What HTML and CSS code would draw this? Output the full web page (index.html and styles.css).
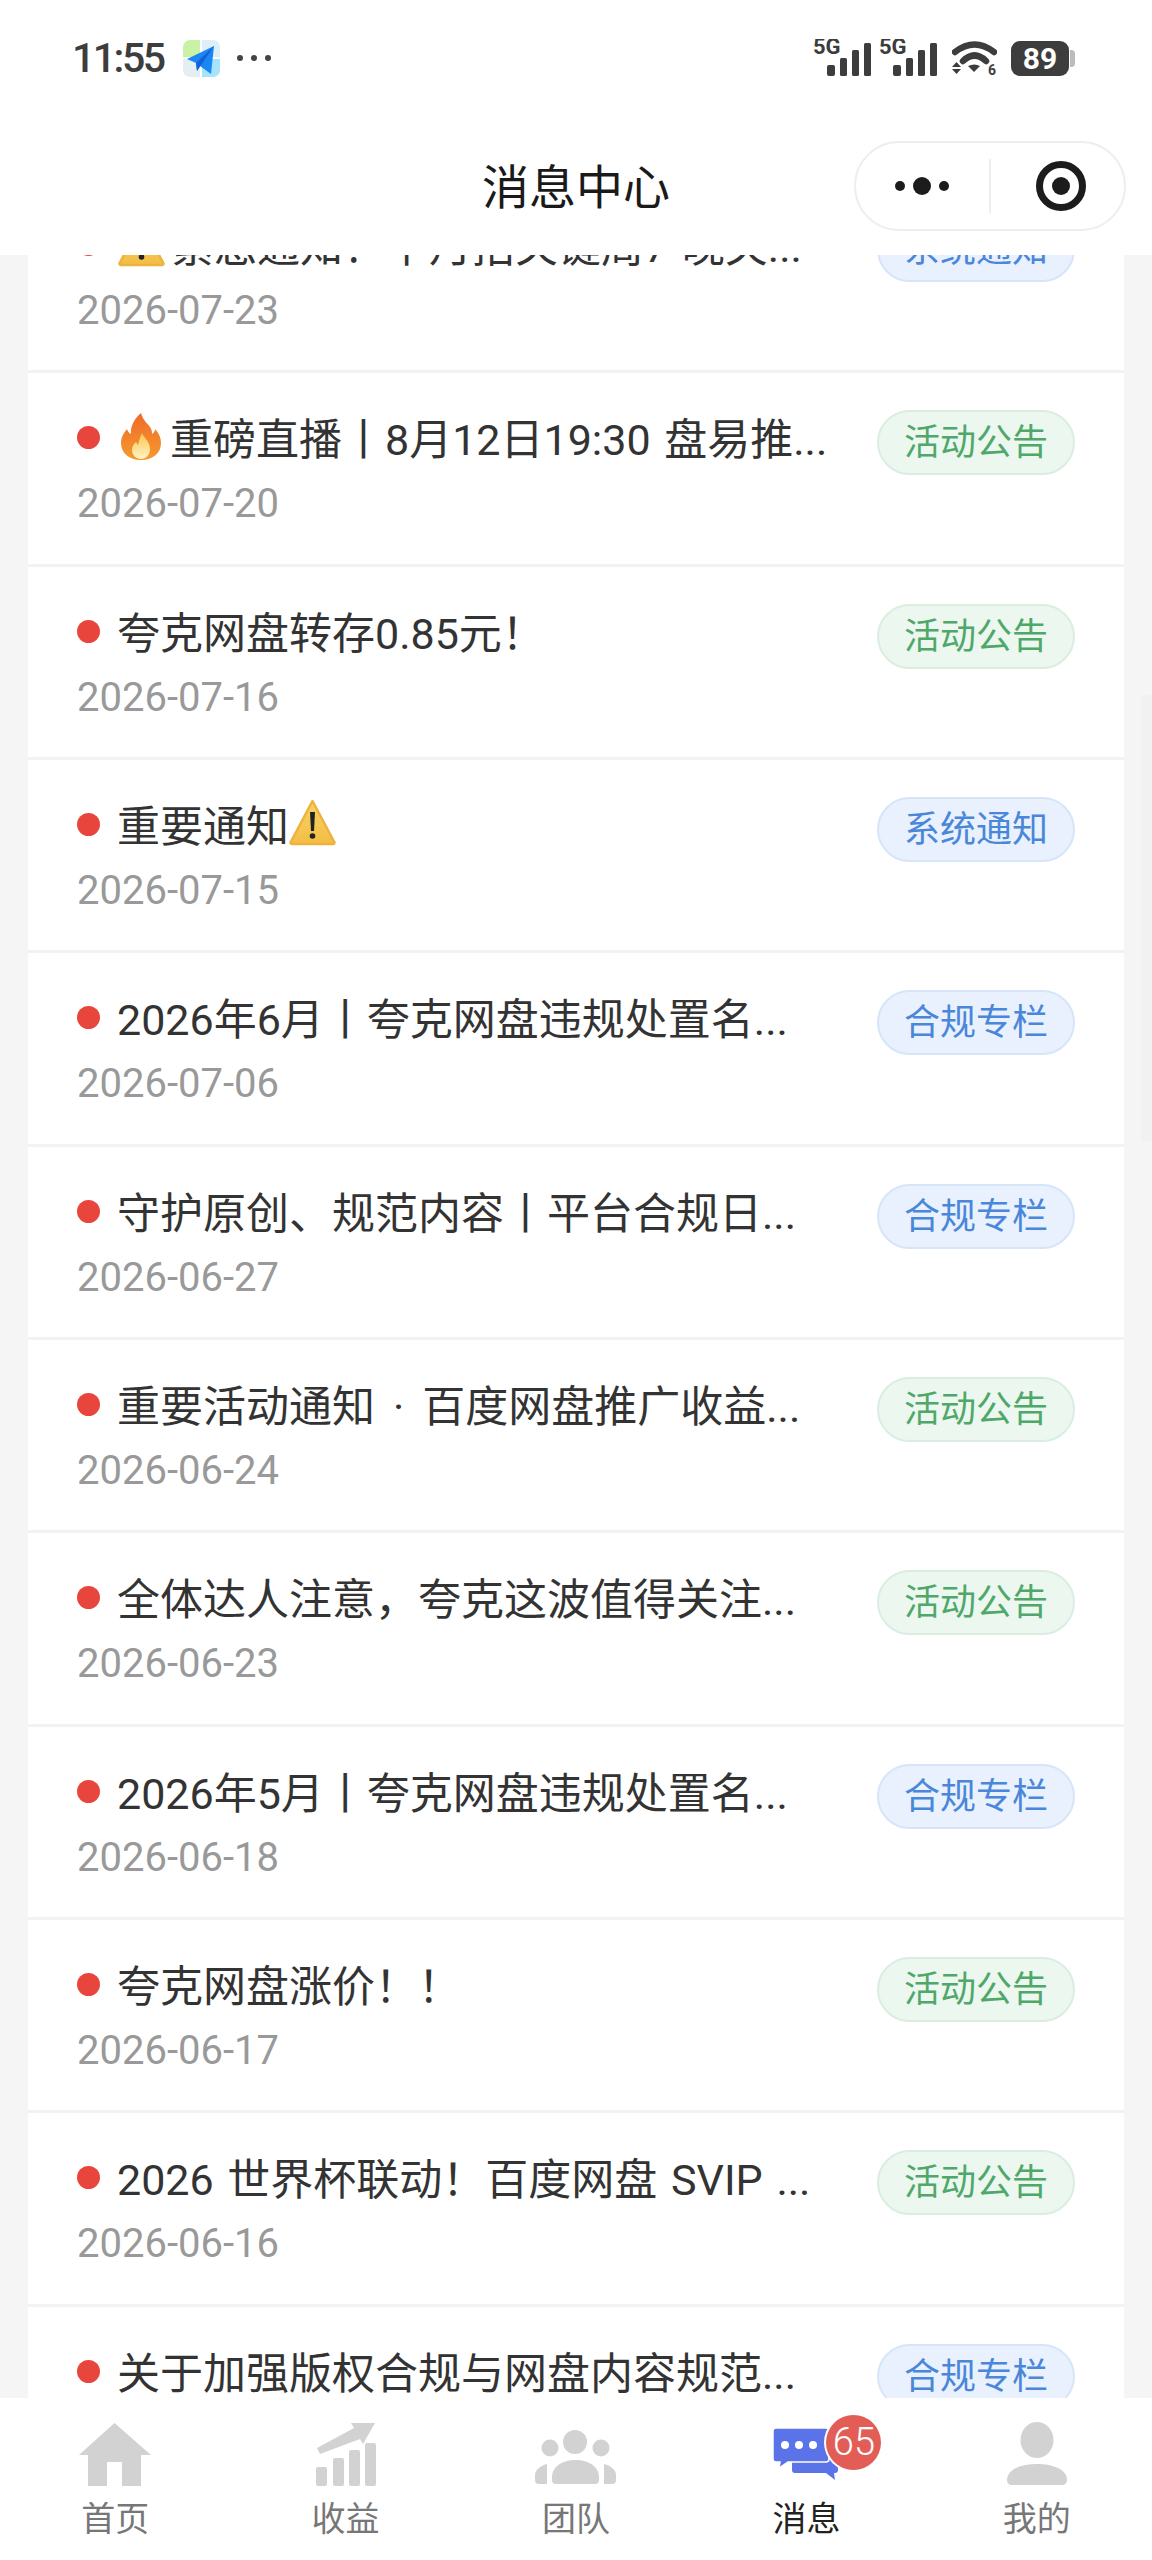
FILE: index.html
```html
<!DOCTYPE html>
<html lang="zh-CN">
<head>
  <meta charset="UTF-8">
  <meta name="viewport" content="width=device-width, initial-scale=1.0">
  <title>消息中心</title>
  <link rel="stylesheet" href="styles.css">
</head>
<body>

  <div class="page">
    <header class="top">
      <div class="status-bar">
        <div class="status-left">
          <span class="clock">11:55</span>
          <svg class="app-icon" width="37" height="37" viewBox="0 0 37 37">
            <path d="M7 0h10v17H0V7a7 7 0 0 1 7-7z" fill="#c8f2a6"/>
            <path d="M19 0h11a7 7 0 0 1 7 7v10H19z" fill="#dfeff8"/>
            <path d="M0 19h17v18H7a7 7 0 0 1-7-7z" fill="#e4eff3"/>
            <path d="M19 19h18v11a7 7 0 0 1-7 7H19z" fill="#a6e4fb"/>
            <path d="M31 6 4 19l9 4 1 8 3-5 11 8z" fill="#1c86f2"/>
            <path d="M13 23 31 6 14 31z" fill="#0f62d8"/>
          </svg>
          <span class="more-dots"><i></i><i></i><i></i></span>
        </div>
        <div class="status-right">
          <svg class="signal" width="60" height="38" viewBox="0 0 60 38">
            <text x="0" y="15" class="sig-text">5G</text>
            <rect x="14" y="26" width="8" height="11" rx="2"/>
            <rect x="27" y="19" width="7" height="18" rx="1.5"/>
            <rect x="39" y="11" width="7" height="26" rx="1.5"/>
            <rect x="51" y="4" width="7" height="33" rx="1.5"/>
          </svg>
          <svg class="signal" width="60" height="38" viewBox="0 0 60 38">
            <text x="0" y="15" class="sig-text">5G</text>
            <rect x="14" y="26" width="8" height="11" rx="2"/>
            <rect x="27" y="19" width="7" height="18" rx="1.5"/>
            <rect x="39" y="11" width="7" height="26" rx="1.5"/>
            <rect x="51" y="4" width="7" height="33" rx="1.5"/>
          </svg>
          <svg class="wifi" width="45" height="36" viewBox="0 0 45 36">
            <path d="M3 12Q22.500-3 42 12" fill="none" stroke="#3d3d3d" stroke-width="6.500" stroke-linecap="round"/>
            <path d="M11 21Q22.500 10 34 21" fill="none" stroke="#3d3d3d" stroke-width="6.500" stroke-linecap="round"/>
            <path d="M16 26q6.500-3 12 0l-6 6z" fill="#3d3d3d"/>
            <path d="M4.500 22 9 27H0zM0 29h9l-4.500 5z" fill="#3d3d3d"/>
            <text x="36" y="35" class="wifi-text">6</text>
          </svg>
          <div class="battery"><span class="battery-num">89</span></div>
        </div>
      </div>
      <nav class="nav-bar">
        <span></span>
        <h1 class="nav-title">消息中心</h1>
        <div class="capsule">
          <svg width="66" height="20" viewBox="0 0 66 20">
            <circle cx="5" cy="10" r="5"/>
            <circle cx="27" cy="10" r="9"/>
            <circle cx="49" cy="10" r="5"/>
          </svg>
          <span class="capsule-line"></span>
          <svg width="50" height="50" viewBox="0 0 50 50">
            <circle cx="25" cy="25" r="21.500" fill="none" stroke="#1c1c1c" stroke-width="7"/>
            <circle cx="25" cy="25" r="9"/>
          </svg>
        </div>
      </nav>
    </header>

    <main class="list-wrap">
      <div class="list">

        <div class="msg">
          <div class="msg-main">
            <div class="msg-title"><i class="dot"></i><svg class="emoji" viewBox="0 0 47 47"><use href="#warn"/></svg><span class="msg-text">紧急通知！下月招关键周7 晚关...</span></div>
            <div class="msg-date">2026-07-23</div>
          </div>
          <span class="tag tag-blue">系统通知</span>
        </div>

        <div class="msg">
          <div class="msg-main">
            <div class="msg-title"><i class="dot"></i><svg class="emoji emoji-fire" viewBox="0 0 40 47">
              <defs>
                <linearGradient id="fireOuter" x1="0" y1="0" x2="0" y2="1">
                  <stop offset="0" stop-color="#f06a2a"/>
                  <stop offset="1" stop-color="#f59a2e"/>
                </linearGradient>
                <linearGradient id="fireInner" x1="0" y1="0" x2="0" y2="1">
                  <stop offset="0" stop-color="#fbc64f"/>
                  <stop offset="1" stop-color="#fff3c4"/>
                </linearGradient>
              </defs>
              <path d="M20 0c2 7 6 10 9 14 2 3 2 5 2 7 2-1 3-3 3-5 4 4 6 9 6 14 0 10-8 17-20 17S0 40 0 30c0-6 3-10 6-14 1 3 2 4 4 5C9 13 14 5 20 0z" fill="url(#fireOuter)"/>
              <path d="M21 20c1 4 8 8 8 16 0 6-4 10-9 10s-9-4-9-9c0-4 2-6 4-8 1 1 1 2 2 3 1-4 2-8 4-12z" fill="url(#fireInner)"/>
            </svg><span class="msg-text">重磅直播丨8月12日19:30 盘易推...</span></div>
            <div class="msg-date">2026-07-20</div>
          </div>
          <span class="tag tag-green">活动公告</span>
        </div>

        <div class="msg">
          <div class="msg-main">
            <div class="msg-title"><i class="dot"></i><span class="msg-text">夸克网盘转存0.85元！</span></div>
            <div class="msg-date">2026-07-16</div>
          </div>
          <span class="tag tag-green">活动公告</span>
        </div>

        <div class="msg">
          <div class="msg-main">
            <div class="msg-title"><i class="dot"></i><span class="msg-text">重要通知</span><svg class="emoji emoji-after" viewBox="0 0 47 47">
              <defs>
                <linearGradient id="warnFill" x1="0" y1="0" x2="0" y2="1">
                  <stop offset="0" stop-color="#f8d468"/>
                  <stop offset="1" stop-color="#f3bd45"/>
                </linearGradient>
                <g id="warn">
                  <path d="M23.500 2 45 42.500a1.500 1.500 0 0 1-1.500 2.500h-40A1.500 1.500 0 0 1 2 42.500z" fill="url(#warnFill)" stroke="#eeb23f" stroke-width="2.500" stroke-linejoin="round"/>
                  <path d="M21 13h5l-1 19h-3z" fill="#222"/>
                  <circle cx="23.500" cy="37" r="2.800" fill="#222"/>
                </g>
              </defs>
              <use href="#warn"/>
            </svg></div>
            <div class="msg-date">2026-07-15</div>
          </div>
          <span class="tag tag-blue">系统通知</span>
        </div>

        <div class="msg">
          <div class="msg-main">
            <div class="msg-title"><i class="dot"></i><span class="msg-text">2026年6月丨夸克网盘违规处置名...</span></div>
            <div class="msg-date">2026-07-06</div>
          </div>
          <span class="tag tag-blue">合规专栏</span>
        </div>

        <div class="msg">
          <div class="msg-main">
            <div class="msg-title"><i class="dot"></i><span class="msg-text">守护原创、规范内容丨平台合规日...</span></div>
            <div class="msg-date">2026-06-27</div>
          </div>
          <span class="tag tag-blue">合规专栏</span>
        </div>

        <div class="msg">
          <div class="msg-main">
            <div class="msg-title"><i class="dot"></i><span class="msg-text">重要活动通知<span class="mid">·</span>百度网盘推广收益...</span></div>
            <div class="msg-date">2026-06-24</div>
          </div>
          <span class="tag tag-green">活动公告</span>
        </div>

        <div class="msg">
          <div class="msg-main">
            <div class="msg-title"><i class="dot"></i><span class="msg-text">全体达人注意，夸克这波值得关注...</span></div>
            <div class="msg-date">2026-06-23</div>
          </div>
          <span class="tag tag-green">活动公告</span>
        </div>

        <div class="msg">
          <div class="msg-main">
            <div class="msg-title"><i class="dot"></i><span class="msg-text">2026年5月丨夸克网盘违规处置名...</span></div>
            <div class="msg-date">2026-06-18</div>
          </div>
          <span class="tag tag-blue">合规专栏</span>
        </div>

        <div class="msg">
          <div class="msg-main">
            <div class="msg-title"><i class="dot"></i><span class="msg-text">夸克网盘涨价！！</span></div>
            <div class="msg-date">2026-06-17</div>
          </div>
          <span class="tag tag-green">活动公告</span>
        </div>

        <div class="msg">
          <div class="msg-main">
            <div class="msg-title"><i class="dot"></i><span class="msg-text">2026 世界杯联动！百度网盘 SVIP ...</span></div>
            <div class="msg-date">2026-06-16</div>
          </div>
          <span class="tag tag-green">活动公告</span>
        </div>

        <div class="msg">
          <div class="msg-main">
            <div class="msg-title"><i class="dot"></i><span class="msg-text">关于加强版权合规与网盘内容规范...</span></div>
          </div>
          <span class="tag tag-blue">合规专栏</span>
        </div>

      </div>
      <div class="scroll-thumb"></div>
    </main>

    <footer class="tabbar">
      <div class="tab">
        <svg class="tab-icon" width="72" height="64" viewBox="0 0 72 64">
          <path d="M35.500 1 72 33H62v31H43V40H28v24H9V33H0z"/>
        </svg>
        <span class="tab-label">首页</span>
      </div>
      <div class="tab">
        <svg class="tab-icon" width="62" height="64" viewBox="0 0 62 64">
          <path d="M2 26 39 6l-3-5 24-0-12 21-3-5L5 32z"/>
          <rect x="1" y="45" width="11" height="19" rx="2"/>
          <rect x="18" y="36" width="11" height="28" rx="2"/>
          <rect x="34" y="28" width="11" height="36" rx="2"/>
          <rect x="50" y="21" width="11" height="43" rx="2"/>
        </svg>
        <span class="tab-label">收益</span>
      </div>
      <div class="tab">
        <svg class="tab-icon" width="82" height="64" viewBox="0 0 82 64">
          <circle cx="40" cy="20" r="12"/>
          <circle cx="15" cy="26" r="8.500"/>
          <circle cx="66" cy="26" r="8.500"/>
          <path d="M17 55c0-10 10-17 23.500-17S64 45 64 55v3a4 4 0 0 1-4 4H21a4 4 0 0 1-4-4z"/>
          <path d="M12 42v20H4a4 4 0 0 1-4-4v-5c0-5 5-9 12-11z"/>
          <path d="M69 42v20h8a4 4 0 0 0 4-4v-5c0-5-5-9-12-11z"/>
        </svg>
        <span class="tab-label">团队</span>
      </div>
      <div class="tab tab-on">
        <div class="tab-msg">
          <svg class="tab-icon" width="66" height="64" viewBox="0 0 66 64">
            <path d="M22 20h40a3 3 0 0 1 3 3v25a3 3 0 0 1-3 3h-1l1 7-9-7H22a3 3 0 0 1-3-3V23a3 3 0 0 1 3-3z" fill="#5b73e8"/>
            <path d="M3 6h50a3 3 0 0 1 3 3v28a3 3 0 0 1-3 3H15l-9 6 1-6H3a3 3 0 0 1-3-3V9a3 3 0 0 1 3-3z" fill="#5b73e8" stroke="#fff" stroke-width="1.500"/>
            <circle cx="12" cy="23" r="4" fill="#fff"/>
            <circle cx="26" cy="23" r="4" fill="#fff"/>
            <circle cx="40" cy="23" r="4" fill="#fff"/>
          </svg>
          <span class="badge">65</span>
        </div>
        <span class="tab-label">消息</span>
      </div>
      <div class="tab">
        <svg class="tab-icon" width="60" height="64" viewBox="0 0 60 64">
          <ellipse cx="30" cy="18" rx="16.500" ry="18"/>
          <path d="M0 58c0-10 13-16 30-16s30 6 30 16c0 3-2 5-5 5H5c-3 0-5-2-5-5z"/>
        </svg>
        <span class="tab-label">我的</span>
      </div>
    </footer>
  </div>

</body>
</html>
```

FILE: styles.css
```css
body {
  margin: 0;
  font-family: Roboto, "Noto Sans CJK SC", sans-serif;
  background-color: #f5f5f5;
}

.page {
  width: 1152px;
  height: 2560px;
  display: flex;
  flex-direction: column;
  overflow: hidden;
}

/* top area */
.top {
  height: 255px;
  flex: none;
  background-color: #fff;
  position: relative;
  z-index: 2;
}

.status-bar {
  height: 116px;
  padding: 0 77px 0 72px;
  display: flex;
  justify-content: space-between;
  align-items: center;
}

.status-left {
  display: flex;
  align-items: center;
}

.clock {
  font-size: 41px;
  font-weight: 500;
  letter-spacing: -2.500px;
  color: #3d3d3d;
  width: 111px;
}

.more-dots {
  display: flex;
  gap: 8px;
  margin-left: 17px;
}

.more-dots i {
  width: 6px;
  height: 6px;
  border-radius: 50%;
  background-color: #444;
}

.status-right {
  display: flex;
  align-items: center;
  gap: 6px;
}

.signal {
  fill: #3d3d3d;
}

.sig-text {
  font-size: 22px;
  font-weight: 700;
}

.wifi {
  margin-left: 7px;
}

.wifi-text {
  font-size: 14px;
  font-weight: 700;
  fill: #3d3d3d;
}

.battery {
  width: 58px;
  height: 35px;
  margin-left: 8px;
  margin-right: 6px;
  border-radius: 9px;
  background-color: #3d3d3d;
  display: flex;
  justify-content: center;
  align-items: center;
  position: relative;
}

.battery::after {
  content: "";
  position: absolute;
  left: 59px;
  top: 9px;
  width: 5px;
  height: 17px;
  border-radius: 0 4px 4px 0;
  background-color: #bbb;
}

.battery-num {
  font-size: 30px;
  font-weight: 700;
  color: #fff;
}

.nav-bar {
  height: 139px;
  padding: 0 26px;
  display: grid;
  grid-template-columns: 1fr auto 1fr;
  align-items: center;
}

.nav-title {
  margin: 0 0 5px;
  font-size: 47px;
  font-weight: 400;
  color: #1a1a1a;
}

.capsule {
  justify-self: end;
  width: 272px;
  height: 90px;
  box-sizing: border-box;
  border: 2px solid #eee;
  border-radius: 45px;
  display: flex;
  align-items: center;
  fill: #1c1c1c;
  padding-left: 39px;
}

.capsule-line {
  width: 2px;
  height: 54px;
  background-color: #eee;
  margin: 0 45px 0 28px;
}

/* message list */
.list-wrap {
  flex: 1;
  min-height: 0;
  overflow: hidden;
  position: relative;
}

.list {
  margin: -75px 28px 0;
}

.msg {
  height: 193.330px;
  box-sizing: border-box;
  padding: 37px 49px 0 49px;
  background-color: #fff;
  border-bottom: 3px solid #f2f2f2;
  display: flex;
  justify-content: space-between;
  align-items: flex-start;
}

.msg-title {
  height: 52px;
  display: flex;
  align-items: center;
  font-size: 43px;
  word-spacing: 3px;
  color: #333;
  white-space: nowrap;
}

.mid {
  margin: 0 18px;
}

.dot {
  width: 23px;
  height: 23px;
  flex: none;
  border-radius: 50%;
  background-color: #e8463c;
  margin-top: 3px;
  margin-right: 17px;
}

.emoji {
  width: 47px;
  height: 47px;
  margin-left: 1px;
  margin-right: 6px;
  flex: none;
}

.emoji-fire {
  width: 40px;
  margin-left: 4px;
  margin-right: 9px;
}

.emoji-after {
  margin-left: 0;
}

.msg-date {
  margin-top: 17px;
  font-size: 40px;
  line-height: 50px;
  color: #999;
}

.tag {
  width: 198px;
  height: 65px;
  box-sizing: border-box;
  border-radius: 33px;
  border-width: 2px;
  border-style: solid;
  font-size: 36px;
  line-height: 63px;
  text-align: center;
  flex: none;
}

.tag-blue {
  background-color: #e8f1fd;
  border-color: #d6e5f8;
  color: #4a86d9;
}

.tag-green {
  background-color: #ecf7ef;
  border-color: #d9eee0;
  color: #4fa86a;
}

.scroll-thumb {
  position: absolute;
  right: 0;
  top: 440px;
  width: 11px;
  height: 446px;
  background-color: #f1f1f1;
}

/* bottom tabs */
.tabbar {
  height: 162px;
  flex: none;
  background-color: #fff;
  display: flex;
  position: relative;
  z-index: 2;
}

.tab {
  flex: 1;
  display: flex;
  flex-direction: column;
  align-items: center;
  padding-top: 24px;
}

.tab-icon {
  display: block;
  fill: #d2d2d2;
}

.tab-label {
  margin-top: 11px;
  font-size: 34px;
  line-height: 44px;
  color: #777;
}

.tab-on .tab-label {
  color: #222;
}

.tab-msg {
  position: relative;
  width: 66px;
  height: 64px;
}

.badge {
  position: absolute;
  left: 53px;
  top: -7px;
  width: 55px;
  height: 55px;
  border-radius: 50%;
  box-shadow: 0 0 0 2px #fff;
  background-color: #e35d57;
  color: #fff;
  font-size: 38px;
  line-height: 55px;
  text-align: center;
  font-weight: 300;
}
```
